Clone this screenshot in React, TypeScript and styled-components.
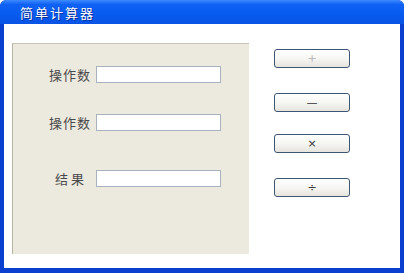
import React from "react";
import styled, { createGlobalStyle } from "styled-components";

const GlobalStyle = createGlobalStyle`
  html, body {
    margin: 0;
    padding: 0;
    background: #ffffff;
  }
  body {
    font-family: "Noto Sans CJK SC", "Liberation Sans", sans-serif;
  }
`;

const fields = [
  { label: "操作数", top: 22, spacing: 1 },
  { label: "操作数", top: 31, spacing: 1 },
  { label: "结果", top: 39, spacing: 3 },
];

const ops = [
  { sign: "+", faint: true, top: 6 },
  { sign: "—", faint: false, top: 25 },
  { sign: "×", faint: false, top: 22 },
  { sign: "÷", faint: false, top: 25 },
];

export default function App() {
  return (
    <>
      <GlobalStyle />
      <Window>
        <TitleBar>
          <Title>简单计算器</Title>
        </TitleBar>
        <Body>
          <Panel>
            {fields.map((f, i) => (
              <FieldRow key={i} $top={f.top}>
                <Label $spacing={f.spacing}>{f.label}</Label>
                <Input />
              </FieldRow>
            ))}
          </Panel>
          <ButtonColumn>
            {ops.map((o) => (
              <OpButton key={o.sign} $top={o.top} $faint={o.faint}>
                {o.sign}
              </OpButton>
            ))}
          </ButtonColumn>
        </Body>
      </Window>
    </>
  );
}

const Window = styled.div`
  width: 404px;
  height: 273px;
  box-sizing: border-box;
  display: flex;
  flex-direction: column;
  background: #0a3fd0;
  border-radius: 6px 6px 0 0;
  padding: 0 4px 5px 4px;
  overflow: hidden;
`;

const TitleBar = styled.div`
  height: 24px;
  margin: 0 -4px;
  padding-left: 20px;
  display: flex;
  align-items: center;
  background: linear-gradient(to bottom, #3d8bff 0%, #0f62f5 18%, #075bef 60%, #0853e4 100%);
  border-radius: 6px 6px 0 0;
`;

const Title = styled.div`
  color: #ffffff;
  font-size: 13px;
  letter-spacing: 2px;
  text-shadow: 1px 1px 0 #0a2f9a;
  line-height: 1;
`;

const Body = styled.div`
  flex: 1;
  display: flex;
  align-items: flex-start;
  background: #ffffff;
  padding: 19px 0 0 8px;
`;

const Panel = styled.div`
  width: 237px;
  height: 211px;
  display: flex;
  flex-direction: column;
  background: #ece9df;
  border-top: 1px solid #c9c5b8;
  border-left: 1px solid #b9b4a6;
  box-sizing: border-box;
`;

const FieldRow = styled.div<{ $top: number }>`
  display: flex;
  align-items: center;
  margin-top: ${(p) => p.$top}px;
  height: 17px;
`;

const Label = styled.div<{ $spacing: number }>`
  width: 83px;
  padding-right: ${(p) => (p.$spacing > 1 ? 9 : 5)}px;
  box-sizing: border-box;
  text-align: right;
  font-size: 13px;
  color: #4a4a4a;
  letter-spacing: ${(p) => p.$spacing}px;
  white-space: nowrap;
`;

const Input = styled.div`
  width: 125px;
  height: 17px;
  box-sizing: border-box;
  background: #ffffff;
  border: 1px solid #a9b3bf;
`;

const ButtonColumn = styled.div`
  display: flex;
  flex-direction: column;
  margin-left: 25px;
`;

const OpButton = styled.div<{ $top: number; $faint: boolean }>`
  width: 76px;
  height: 19px;
  box-sizing: border-box;
  margin-top: ${(p) => p.$top}px;
  border: 1px solid #3d5672;
  border-radius: 3px;
  background: linear-gradient(to bottom, #ffffff 0%, #f6f6f3 50%, #e6e4dd 100%);
  display: flex;
  align-items: center;
  justify-content: center;
  font-family: "DejaVu Sans", sans-serif;
  font-size: 11px;
  color: ${(p) => (p.$faint ? "#b8b8b8" : "#333333")};
  line-height: 1;
`;
